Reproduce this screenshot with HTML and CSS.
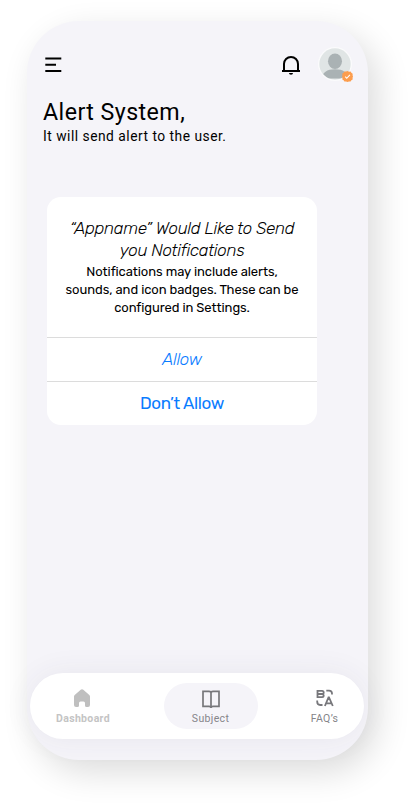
FILE: index.html
```html
<!DOCTYPE html>
<html lang="en">
<head>
<meta charset="utf-8">
<title>Alert System</title>
<link rel="stylesheet" href="styles.css">
</head>
<body>
<main class="phone">
  <header class="topbar">
    <svg class="menu" width="18" height="16" viewBox="0 0 18 16" fill="none" stroke="#000" stroke-width="1.900"><path d="M1.300 1.500h16M1.300 7.700h10.700M1.300 14h16"/></svg>
    <div class="actions">
      <svg width="20" height="20" viewBox="0 0 20 20" fill="none" stroke="#000" stroke-width="2"><path d="M3 15.500V9a7 7 0 0 1 14 0v6.500M1 16h18"/><path d="M8 18h4a2 1.700 0 0 1-4 0z" fill="#000" stroke="none"/></svg>
      <div class="avatar">
        <svg width="34" height="34" viewBox="0 0 34 34"><defs><clipPath id="face"><circle cx="17" cy="17" r="15.500"/></clipPath></defs><circle cx="17" cy="17" r="17" fill="#fbfbfc"/><circle cx="17" cy="17" r="15.700" fill="#e0e5e5"/><g clip-path="url(#face)" fill="#aab2b4"><ellipse cx="17" cy="14.300" rx="7" ry="7.700"/><path d="M4 31.500c0-6 5-9.300 13-9.300s13 3.300 13 9.300z"/></g></svg>
        <svg class="badge" width="11" height="11" viewBox="0 0 10 10"><path d="M5 0l1.300.6 1.500-.1.700 1.200 1.200.7-.1 1.500L10 5l-.4 1.200.1 1.500-1.200.7-.7 1.200-1.500-.1L5 10l-1.300-.5-1.500.1-.7-1.200-1.200-.7.100-1.500L0 5l.4-1.200-.1-1.500 1.200-.7.700-1.200 1.500.1z" fill="#fc9d4d"/><path d="M2.900 5.200l1.400 1.400 2.900-3" fill="none" stroke="#fff" stroke-width="1"/></svg>
      </div>
    </div>
  </header>
  <h1 class="title">Alert System,</h1>
  <p class="subtitle">It will send alert to the user.</p>

  <section class="dialog">
    <div class="message">
      <h2 class="question">“Appname” Would Like to Send<br>you Notifications</h2>
      <p class="details">Notifications may include alerts,<br>sounds, and icon badges. These can be<br>configured in Settings.</p>
    </div>
    <button class="choice allow">Allow</button>
    <button class="choice deny">Don’t Allow</button>
  </section>

  <nav class="tabs">
    <a class="tab home">
      <svg width="18" height="20" viewBox="0 0 18 20"><path d="M9 1.200q.700 0 1.300.5l6 5.200q.7.600.7 1.600V17q0 2-2 2h-1.500q-1.500 0-1.500-1.500V15q0-1.500-1.500-1.500h-3Q6 13.500 6 15v2.500Q6 19 4.500 19H3q-2 0-2-2V8.500q0-1 .7-1.600l6-5.200q.6-.5 1.300-.5z" fill="#bfbfbf"/></svg>
      <span>Dashboard</span>
    </a>
    <a class="tab subject">
      <svg width="20" height="20" viewBox="0 0 20 20" fill="none" stroke="#77777b" stroke-width="1.700"><path d="M2 2.300h6q2 0 2 1.500 0-1.500 2-1.500h6v15h-6q-2 0-2 1.500 0-1.500-2-1.500H2zM10 3.800V19"/></svg>
      <span>Subject</span>
    </a>
    <a class="tab faq">
      <svg width="18" height="18" viewBox="0 0 18 18" fill="none" stroke="#77777b" stroke-width="1.800"><path d="M1.500 1.800h4.600a1.600 1.600 0 0 1 0 3.200H1.500M6.100 5a1.600 1.600 0 0 1 0 3.200H1.500V1M10.300 1.600H13q3 0 3 3v1M1.200 11.500v1q0 3.500 3 3.500h2.300M8.900 17l3.600-8.600h.5L16.800 17M10.300 14.300h5.200"/></svg>
      <span>FAQ’s</span>
    </a>
  </nav>
</main>
</body>
</html>
```
FILE: styles.css
```css
* { box-sizing: border-box; }
body {
  margin: 0;
  padding: 21px 44px 49px 27px;
  height: 809px;
  background: #fff;
  overflow: hidden;
  font-family: Roboto, sans-serif;
  color: #000;
}
.phone {
  width: 341px;
  height: 739px;
  display: flex;
  flex-direction: column;
  border-radius: 52px;
  background: #f5f4f9;
  box-shadow: 9px 12px 34px rgba(0, 0, 0, .14);
}
.topbar {
  display: flex;
  justify-content: space-between;
  padding: 27px 16px 0 17px;
}
.menu { margin-top: 9px; }
.actions { display: flex; gap: 17px; }
.actions > svg { margin-top: 7px; }
.avatar { position: relative; width: 34px; height: 34px; margin-top: -1px; }
.avatar svg { display: block; }
.avatar .badge { position: absolute; right: -1px; bottom: -1px; }
.title {
  margin: 16px 0 0 16px;
  font-size: 23.2px;
  line-height: 30px;
  font-weight: 400;
  letter-spacing: .45px;
}
.subtitle {
  margin: 0 0 0 16px;
  font-size: 13.8px;
  line-height: 19px;
  letter-spacing: .5px;
}
.dialog {
  width: 270px;
  height: 228px;
  margin: 51px 0 0 20px;
  display: flex;
  flex-direction: column;
  border-radius: 14px;
  background: #fff;
  overflow: hidden;
  text-align: center;
  font-family: Rubik, Roboto, sans-serif;
}
.message { height: 140px; padding-top: 20px; white-space: nowrap; }
.question {
  margin: 0;
  font-size: 17px;
  line-height: 22px;
  font-style: italic;
  font-weight: 300;
  letter-spacing: -.31px;
}
.details { margin: 2px 0 0; font-size: 13px; line-height: 18px; letter-spacing: -.08px; }
.choice {
  height: 44px;
  padding: 0 0 2px;
  border: 0;
  border-top: 1px solid #dcdcdc;
  background: none;
  color: #0a7cff;
  font: 400 17px/22px Rubik, Roboto, sans-serif;
  letter-spacing: -.4px;
}
.allow { font-style: italic; font-weight: 300; }
.tabs {
  width: 334px;
  height: 66px;
  margin: auto 0 21px 3px;
  display: grid;
  grid-template-columns: 106px 149px 79px;
  align-items: center;
  border-radius: 33px;
  background: #fff;
  box-shadow: 0 0 30px rgba(60, 60, 90, .07);
}
.tab {
  display: flex;
  flex-direction: column;
  align-items: center;
  justify-self: center;
  gap: 3px;
  color: #858589;
  font-size: 10.5px;
  line-height: 13px;
  letter-spacing: .35px;
}
.tab svg { display: block; }
.home { color: #c4c4c4; font-weight: 700; padding-top: 2px; }
.home svg { margin: -1px 2px 1px 0; }
.subject { width: 94px; height: 46px; padding-top: 6px; border-radius: 23px; background: #f5f4f9; }
.subject svg { margin-left: 1px; }
.faq { padding-top: 2px; gap: 5px; }
.faq svg { margin: -1px 0 0 1px; }
```
